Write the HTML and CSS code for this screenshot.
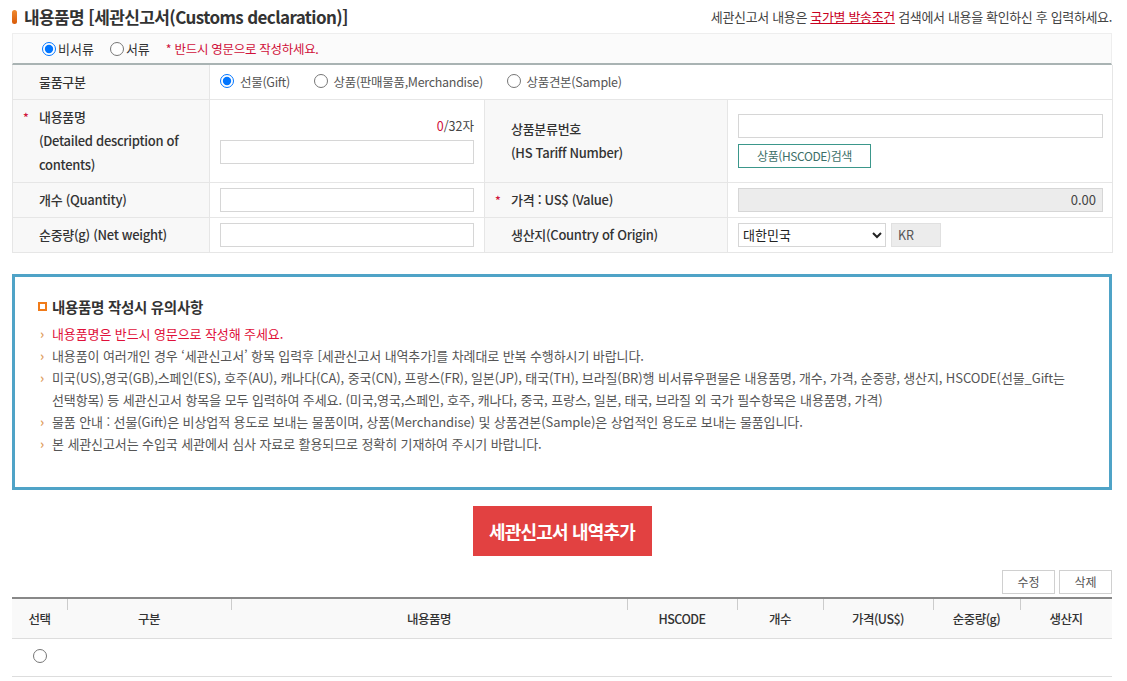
FILE: index.html
```html
<!DOCTYPE html>
<html lang="ko">
<head>
<meta charset="utf-8">
<title>내용품명</title>
<link rel="stylesheet" href="styles.css">
</head>
<body>
<div class="page">
  <div class="head">
    <h2 class="title"><span class="bar"></span>내용품명 [세관신고서(Customs declaration)]</h2>
    <p class="guide">세관신고서 내용은 <a href="#">국가별 발송조건</a> 검색에서 내용을 확인하신 후 입력하세요.</p>
  </div>

  <div class="typebar">
    <label class="rd"><input type="radio" name="doc" checked>비서류</label>
    <label class="rd"><input type="radio" name="doc">서류</label>
    <span class="warn">* 반드시 영문으로 작성하세요.</span>
  </div>

  <table class="form">
    <colgroup><col class="c1"><col class="c2"><col class="c3"><col class="c4"></colgroup>
    <tr class="r35">
      <th><div class="lb"><span class="req"></span><span>물품구분</span></div></th>
      <td colspan="3" class="kind">
        <label class="rd2"><input type="radio" name="kind" checked>선물(Gift)</label>
        <label class="rd2"><input type="radio" name="kind">상품(판매물품,Merchandise)</label>
        <label class="rd2"><input type="radio" name="kind">상품견본(Sample)</label>
      </td>
    </tr>
    <tr class="r83">
      <th><div class="lb"><span class="req">*</span><span>내용품명<br>(Detailed description of<br>contents)</span></div></th>
      <td>
        <div class="count"><em>0</em>/32자</div>
        <input type="text" class="inp">
      </td>
      <th><div class="lb"><span class="req"></span><span>상품분류번호<br>(HS Tariff Number)</span></div></th>
      <td>
        <input type="text" class="inp wide">
        <button type="button" class="hsbtn">상품(HSCODE)검색</button>
      </td>
    </tr>
    <tr class="r35">
      <th><div class="lb"><span class="req"></span><span>개수 (Quantity)</span></div></th>
      <td><input type="text" class="inp"></td>
      <th><div class="lb"><span class="req">*</span><span>가격 : US$ (Value)</span></div></th>
      <td><input type="text" class="inp wide ro" value="0.00" readonly></td>
    </tr>
    <tr class="r35">
      <th><div class="lb"><span class="req"></span><span>순중량(g) (Net weight)</span></div></th>
      <td><input type="text" class="inp"></td>
      <th><div class="lb"><span class="req"></span><span>생산지(Country of Origin)</span></div></th>
      <td>
        <div class="origin">
          <select class="sel"><option>대한민국</option></select>
          <span class="code">KR</span>
        </div>
      </td>
    </tr>
  </table>

  <div class="notice">
    <h3 class="ntitle"><span class="sq"></span>내용품명 작성시 유의사항</h3>
    <ul class="nlist">
      <li class="red">내용품명은 반드시 영문으로 작성해 주세요.</li>
      <li>내용품이 여러개인 경우 ‘세관신고서’ 항목 입력후 [세관신고서 내역추가]를 차례대로 반복 수행하시기 바랍니다.</li>
      <li>미국(US),영국(GB),스페인(ES), 호주(AU), 캐나다(CA), 중국(CN), 프랑스(FR), 일본(JP), 태국(TH), 브라질(BR)행 비서류우편물은 내용품명, 개수, 가격, 순중량, 생산지, HSCODE(선물_Gift는<br>선택항목) 등 세관신고서 항목을 모두 입력하여 주세요. (미국,영국,스페인, 호주, 캐나다, 중국, 프랑스, 일본, 태국, 브라질 외 국가 필수항목은 내용품명, 가격)</li>
      <li>물품 안내 : 선물(Gift)은 비상업적 용도로 보내는 물품이며, 상품(Merchandise) 및 상품견본(Sample)은 상업적인 용도로 보내는 물품입니다.</li>
      <li>본 세관신고서는 수입국 세관에서 심사 자료로 활용되므로 정확히 기재하여 주시기 바랍니다.</li>
    </ul>
  </div>

  <div class="addwrap"><button type="button" class="addbtn">세관신고서 내역추가</button></div>

  <div class="tools">
    <button type="button" class="sbtn">수정</button>
    <button type="button" class="sbtn">삭제</button>
  </div>

  <table class="list">
    <colgroup>
      <col class="w55"><col class="w164"><col class="w396"><col class="w110">
      <col class="w86"><col class="w110"><col class="w87"><col class="w92">
    </colgroup>
    <thead>
      <tr><th>선택</th><th>구분</th><th>내용품명</th><th>HSCODE</th><th>개수</th><th>가격(US$)</th><th>순중량(g)</th><th>생산지</th></tr>
    </thead>
    <tbody>
      <tr><td><input type="radio" name="sel" class="lrd"></td><td></td><td></td><td></td><td></td><td></td><td></td><td></td></tr>
    </tbody>
  </table>
</div>
</body>
</html>
```
FILE: styles.css
```css
* { box-sizing: border-box; }
html, body { margin: 0; padding: 0; background: #fff; }
body {
  font-family: "Noto Sans CJK KR", "Noto Sans", sans-serif;
  color: #333;
  font-size: 13px;
}
.page { width: 1100px; margin-left: 12px; }

.head {
  display: flex;
  justify-content: space-between;
  align-items: center;
  height: 33px;
}
.title {
  margin: 0;
  font-size: 17px;
  font-weight: 700;
  letter-spacing: -0.6px;
  color: #333;
  display: flex;
  align-items: center;
}
.title .bar {
  width: 5px;
  height: 14px;
  border-radius: 3px;
  background: linear-gradient(#f08a30, #d85a08);
  margin-right: 7px;
}
.guide {
  margin: 0;
  font-size: 13px;
  letter-spacing: -0.35px;
  color: #444;
}
.guide a { color: #c8001e; text-decoration: underline; }

.typebar {
  height: 32px;
  border: 1px solid #eee;
  border-bottom: 2px solid #a9b3b3;
  background: #fbfbfb;
  display: flex;
  align-items: center;
  padding-left: 29px;
}
.rd { display: inline-flex; align-items: center; margin-right: 16px; font-size: 13px; color: #333; }
.rd input { margin: 0 2px 0 0; width: 14px; height: 14px; }
.warn { color: #d0103a; font-size: 12.5px; letter-spacing: -0.3px; margin-left: 0; }

.form {
  width: 1100px;
  border-collapse: collapse;
  table-layout: fixed;
}
.form col.c1 { width: 197px; }
.form col.c2 { width: 275px; }
.form col.c3 { width: 243px; }
.form col.c4 { width: 385px; }
.form th, .form td {
  border: 1px solid #e6e6e6;
  padding: 0 10px;
  vertical-align: middle;
  text-align: left;
}
.form th { background: #f8f8f8; font-weight: 500; }
.form td { background: #fff; }
.form tr:first-child th, .form tr:first-child td { border-top: 0; }
.r35 { height: 35px; }
.form tr:first-child { height: 34px; }
.r83 { height: 83px; }
.lb { display: flex; align-items: flex-start; font-size: 13px; line-height: 24px; color: #333; letter-spacing: -0.3px; }
.req { width: 16px; flex: none; color: #d0103a; font-size: 12px; }

.kind { padding-left: 23px; }
.rd2 { display: inline-flex; align-items: center; margin-right: 20px; font-size: 12.5px; color: #555; letter-spacing: -0.3px; }
.rd2 input { margin: 0 6px 0 0; width: 14px; height: 14px; }

.count { text-align: right; font-size: 12.5px; color: #444; line-height: 18px; margin: 0 0 5px; }
.count em { font-style: normal; color: #d0103a; }
.inp {
  display: block;
  width: 254px;
  height: 24px;
  border: 1px solid #d6d6d6;
  background: #fff;
  font: inherit;
  padding: 0 6px;
}
.inp.wide { width: 365px; }
.inp.ro { background: #ececec; text-align: right; color: #444; font-size: 13px; }
.hsbtn {
  margin-top: 6px;
  height: 24px;
  width: 133px;
  border: 1px solid #3b978b;
  background: #fff;
  color: #3d6f68;
  font-family: inherit;
  font-size: 12px;
  letter-spacing: -0.4px;
  padding: 0;
}
.origin { display: flex; align-items: center; gap: 5px; }
.sel {
  width: 148px;
  height: 24px;
  border: 1px solid #d6d6d6;
  background: #fff;
  font-family: inherit;
  font-size: 13px;
  color: #222;
}
.code {
  width: 50px;
  height: 24px;
  border: 1px solid #e0e0e0;
  background: #ececec;
  color: #555;
  font-size: 12.5px;
  line-height: 22px;
  padding-left: 6px;
}

.notice {
  margin-top: 21px;
  border: 3px solid #4fa3c7;
  padding: 18px 20px 32px 23px;
}
.ntitle {
  margin: 0 0 4px;
  font-size: 14.5px;
  font-weight: 700;
  letter-spacing: -0.3px;
  color: #333;
  display: flex;
  align-items: center;
  line-height: 24px;
}
.ntitle .sq {
  width: 9px;
  height: 9px;
  border: 2px solid #f07b1a;
  margin-right: 5px;
}
.nlist { list-style: none; margin: 0; padding: 0; }
.nlist li {
  position: relative;
  padding-left: 14px;
  font-size: 13px;
  line-height: 22px;
  color: #555;
  letter-spacing: -0.1px;
}
.nlist li::before {
  content: "›";
  position: absolute;
  left: 2px;
  top: 0;
  color: #e0a060;
  font-weight: 700;
}
.nlist li.red { color: #e0103a; }

.addwrap { display: flex; justify-content: center; margin-top: 16px; }
.addbtn {
  width: 179px;
  height: 50px;
  border: 0;
  background: #e24141;
  color: #fff;
  font-family: inherit;
  font-weight: 700;
  font-size: 18px;
  letter-spacing: -0.8px;
}

.tools { display: flex; justify-content: flex-end; gap: 4px; margin-top: 14px; }
.sbtn {
  width: 53px;
  height: 24px;
  border: 1px solid #d0d0d0;
  background: #fff;
  color: #555;
  font-family: inherit;
  font-size: 12px;
  padding: 0;
}

.list {
  width: 1100px;
  margin-top: 3px;
  border-collapse: collapse;
  table-layout: fixed;
  border-top: 2px solid #888;
}
.list .w55 { width: 55px; }
.list .w164 { width: 164px; }
.list .w396 { width: 396px; }
.list .w110 { width: 110px; }
.list .w86 { width: 86px; }
.list .w87 { width: 87px; }
.list .w92 { width: 92px; }
.list thead th {
  height: 41px;
  background: #f9f9f9;
  font-size: 12.5px;
  font-weight: 500;
  letter-spacing: -0.5px;
  color: #333;
  border-bottom: 1px solid #ddd;
  position: relative;
}
.list thead th + th::before {
  content: "";
  position: absolute;
  left: 0;
  top: 0;
  height: 11px;
  border-left: 1px solid #ccc;
}
.list tbody td {
  height: 38px;
  border-bottom: 1px solid #ddd;
  text-align: center;
}
.lrd { margin: 0; width: 14px; height: 14px; }
```
